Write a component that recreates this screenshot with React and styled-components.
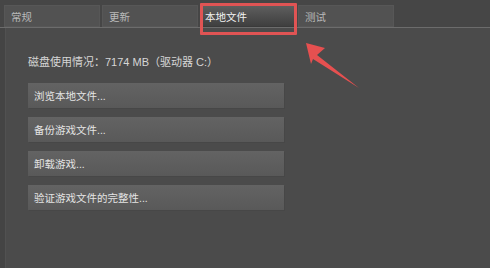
import React from "react";
import styled, { createGlobalStyle } from "styled-components";

const GlobalStyle = createGlobalStyle`
  html, body {
    margin: 0;
    padding: 0;
    background: #4b4b4b;
  }
  body {
    font-family: "Liberation Sans", "Noto Sans CJK SC", sans-serif;
  }
`;

const Page = styled.div`
  position: relative;
  width: 490px;
  height: 268px;
  overflow: hidden;
  background: #4b4b4b;
  box-shadow: inset 5px 0 0 #444444, inset 6px 0 0 #515151;
`;

const TabBar = styled.div`
  display: flex;
  gap: 2px;
  height: 28px;
  padding: 5px 0 0 4px;
  box-sizing: border-box;
  background: #464646;
  border-bottom: 1px solid #6c6c6c;
`;

const Tab = styled.div`
  position: relative;
  width: 96px;
  height: 22px;
  box-sizing: border-box;
  display: flex;
  align-items: center;
  padding-left: ${(p) => (p.$active ? "4px" : "6px")};
  font-size: 10.5px;
  color: ${(p) => (p.$active ? "#f2f2f2" : "#b9b9b9")};
  background: ${(p) =>
    p.$active
      ? "linear-gradient(#5e5e5e, #3f3f3f)"
      : "#525252"};
  border: 1px solid ${(p) => (p.$active ? "#3a3a3a" : "#575757")};

  &::after {
    content: "";
    display: ${(p) => (p.$marked ? "block" : "none")};
    position: absolute;
    left: -1px;
    right: -2px;
    top: -3px;
    bottom: -9px;
    border: 3px solid #e05454;
    border-radius: 1px;
  }
`;

const Content = styled.div`
  display: flex;
  flex-direction: column;
  padding: 27px 0 0 28px;
`;

const DiskInfo = styled.div`
  font-size: 11px;
  line-height: 14px;
  color: #d6d6d6;
  margin-bottom: 14px;
`;

const ButtonList = styled.div`
  display: flex;
  flex-direction: column;
  gap: 9px;
`;

const ActionButton = styled.div`
  width: 256px;
  height: 25px;
  box-sizing: border-box;
  display: flex;
  align-items: center;
  padding-left: 6px;
  font-size: 10.5px;
  color: #e4e4e4;
  background: linear-gradient(#636363, #595959);
  box-shadow: 1px 1px 0 #474747;
`;

const Arrow = styled.svg`
  position: absolute;
  left: 0;
  top: 0;
  pointer-events: none;
`;

const tabs = ["常规", "更新", "本地文件", "测试"];
const actions = [
  "浏览本地文件...",
  "备份游戏文件...",
  "卸载游戏...",
  "验证游戏文件的完整性...",
];

const App = () => {
  return (
    <Page>
      <GlobalStyle />
      <TabBar>
        {tabs.map((t) => (
          <Tab key={t} $active={t === "本地文件"} $marked={t === "本地文件"}>
            {t}
          </Tab>
        ))}
      </TabBar>
      <Content>
        <DiskInfo>磁盘使用情况：7174 MB（驱动器 C:）</DiskInfo>
        <ButtonList>
          {actions.map((a) => (
            <ActionButton key={a}>{a}</ActionButton>
          ))}
        </ButtonList>
      </Content>
      <Arrow width="490" height="268" viewBox="0 0 490 268">
        <polygon
          points="306,43 325,48 317,55 359,88 313,59 311,64"
          fill="#e65050"
        />
      </Arrow>
    </Page>
  );
};

export default App;
